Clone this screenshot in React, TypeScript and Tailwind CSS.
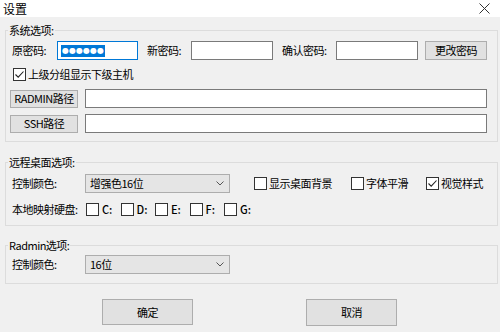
import type { ReactNode } from "react";

const font = { fontFamily: '"Noto Sans CJK SC", "Microsoft YaHei", sans-serif' };

function Box({ checked = false }: { checked?: boolean }) {
  return (
    <span className="flex h-[13px] w-[13px] shrink-0 items-center justify-center border border-[#333] bg-white">
      {checked && (
        <svg width="11" height="11" viewBox="0 0 11 11" fill="none">
          <path d="M1.5 5.5 L4.2 8.2 L9.5 2.5" stroke="#222" strokeWidth="1.1" />
        </svg>
      )}
    </span>
  );
}

function Check({ label, checked, className = "" }: { label: string; checked?: boolean; className?: string }) {
  return (
    <label className={`flex items-center gap-[2px] ${className}`}>
      <Box checked={checked} />
      <span>{label}</span>
    </label>
  );
}

function Group({ title, children, className = "" }: { title: string; children: ReactNode; className?: string }) {
  return (
    <fieldset className={`ml-[5px] w-[493px] border border-[#dcdcdc] ${className}`}>
      <legend className="ml-[2px] px-[1px] leading-[14px]">{title}</legend>
      {children}
    </fieldset>
  );
}

function Combo({ value }: { value: string }) {
  return (
    <div className="flex h-[19px] w-[145px] items-center justify-between border border-[#adadad] bg-[#e5e5e5] pl-[4px] pr-[5px]">
      <span>{value}</span>
      <svg width="8" height="5" viewBox="0 0 8 5" fill="none">
        <path d="M0.5 0.5 L4 4 L7.5 0.5" stroke="#555" strokeWidth="1" />
      </svg>
    </div>
  );
}

const input = "h-[19px] border border-[#7a7a7a] bg-white";
const btn = "flex items-center justify-center border border-[#adadad] bg-[#e1e1e1]";

export default function App() {
  return (
    <div style={font} className="h-[332px] w-[500px] overflow-hidden bg-[#f0f0f0] text-[11px] tracking-[-0.5px] text-black">
      {/* 标题栏 */}
      <div className="flex h-[17px] items-center justify-between bg-white pl-[3px] pr-[10px]">
        <span className="text-[12px] tracking-normal">设置</span>
        <svg width="11" height="11" viewBox="0 0 11 11" fill="none">
          <path d="M0.5 0.5 L10.5 10.5 M10.5 0.5 L0.5 10.5" stroke="#333" strokeWidth="1" />
        </svg>
      </div>

      <Group title="系统选项:" className="mt-[6px] pb-[8px]">
        <div className="mt-[4px] flex items-center pl-[6px]">
          <span className="w-[45px]">原密码:</span>
          <div className={`${input} flex w-[81px] items-center border-[#0078d7] pl-[3px]`}>
            <span className="bg-[#0078d7] px-[1px] text-[8px] leading-[12px] tracking-[0px] text-white" style={{ fontFamily: '"DejaVu Sans", sans-serif' }}>
              ●●●●●●
            </span>
          </div>
          <span className="ml-[9px] w-[44px]">新密码:</span>
          <div className={`${input} w-[82px]`} />
          <span className="ml-[9px] w-[54px]">确认密码:</span>
          <div className={`${input} w-[82px]`} />
          <button className={`${btn} ml-[7px] h-[19px] w-[62px]`}>更改密码</button>
        </div>

        <Check label="上级分组显示下级主机" checked className="mt-[7px] h-[14px] pl-[7px]" />

        <div className="mt-[8px] flex items-center pl-[4px]">
          <button className={`${btn} h-[18px] w-[68px]`}>RADMIN路径</button>
          <div className={`${input} ml-[7px] w-[402px]`} />
        </div>
        <div className="mt-[6px] flex items-center pl-[4px]">
          <button className={`${btn} h-[18px] w-[68px]`}>SSH路径</button>
          <div className={`${input} ml-[7px] w-[402px]`} />
        </div>
      </Group>

      <Group title="远程桌面选项:" className="mt-[13px] pb-[9px]">
        <div className="mt-[5px] flex items-center pl-[6px]">
          <span className="w-[73px]">控制颜色:</span>
          <Combo value="增强色16位" />
          <Check label="显示桌面背景" className="ml-[24px]" />
          <Check label="字体平滑" className="ml-[19px]" />
          <Check label="视觉样式" checked className="ml-[18px]" />
        </div>
        <div className="mt-[9px] flex h-[14px] items-center pl-[6px]">
          <span className="w-[74px]">本地映射硬盘:</span>
          {["C:", "D:", "E:", "F:", "G:"].map((d) => (
            <label key={d} className="flex w-[34.5px] items-center gap-[3px]">
              <Box />
              <span className="font-medium tracking-normal">{d}</span>
            </label>
          ))}
        </div>
      </Group>

      <Group title="Radmin选项:" className="mt-[12px] pb-[9px]">
        <div className="mt-[3px] flex items-center pl-[6px]">
          <span className="w-[73px]">控制颜色:</span>
          <Combo value="16位" />
        </div>
      </Group>

      <div className="mt-[15px] flex pl-[102px]">
        <button className={`${btn} h-[26px] w-[91px] border-[#0078d7]`}>确定</button>
        <button className={`${btn} ml-[113px] h-[27px] w-[91px]`}>取消</button>
      </div>
    </div>
  );
}
